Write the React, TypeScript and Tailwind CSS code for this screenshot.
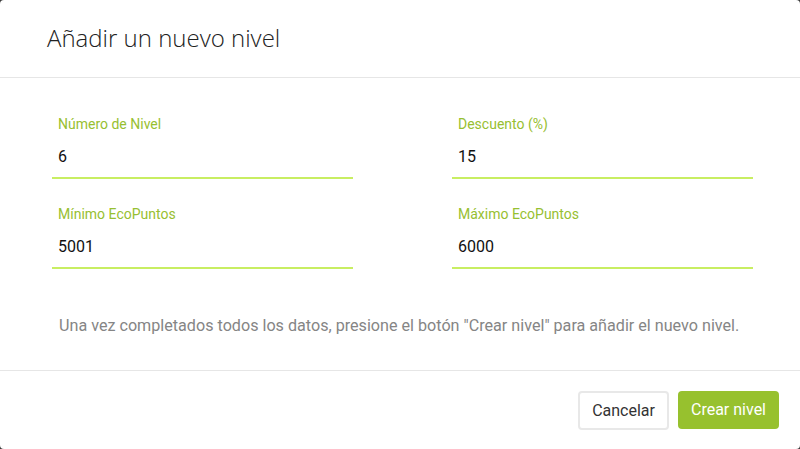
import { useState } from 'react';

const FIELDS = [
  { id: 'nivel', label: 'Número de Nivel', value: '6' },
  { id: 'descuento', label: 'Descuento (%)', value: '15' },
  { id: 'minimo', label: 'Mínimo EcoPuntos', value: '5001' },
  { id: 'maximo', label: 'Máximo EcoPuntos', value: '6000' },
];

function Field({ id, label, value }: { id: string; label: string; value: string }) {
  const [v, setV] = useState(value);
  return (
    <div className="pl-[52px] pr-[47px]">
      <label htmlFor={id} className="block h-5 pl-[6px] text-[14px] leading-5 text-[#97c031]">
        {label}
      </label>
      <input
        id={id}
        value={v}
        onChange={(e) => setV(e.target.value)}
        className="block h-[45px] w-full border-b-2 border-[#c8ee62] bg-transparent px-[6px] pt-[1px] text-[16px] text-[#111] outline-none"
      />
    </div>
  );
}

export default function App() {
  return (
    <div className="h-[449px] bg-[#3a3a3a] font-['Roboto',sans-serif]">
      <div className="flex h-full flex-col overflow-hidden rounded-[4px] bg-white">
        <div className="flex h-[78px] items-center border-b border-[#e6e6e6] px-[47px]">
          <h1 className="pb-[2px] font-['Open_Sans',sans-serif] text-[24px] font-light text-[#222]">
            Añadir un nuevo nivel
          </h1>
        </div>

        <div className="pt-[36px] pb-[34px]">
          <div className="grid grid-cols-2 gap-y-[25px]">
            {FIELDS.map((f) => (
              <Field key={f.id} {...f} />
            ))}
          </div>
          <p className="mt-[47px] pl-[59px] text-[16.15px] leading-5 text-[#858585]">
            Una vez completados todos los datos, presione el botón "Crear nivel" para añadir el nuevo nivel.
          </p>
        </div>

        <div className="flex flex-1 justify-end gap-[9px] border-t border-[#e6e6e6] pt-[20px] pr-[21px]">
          <button className="h-[39px] rounded-[4px] border-2 border-[#e8e8e8] bg-white px-[12px] text-[16px] text-[#333]">
            Cancelar
          </button>
          <button className="h-[38px] rounded-[4px] bg-[#97c12e] px-[13px] text-[16px] text-white">
            Crear nivel
          </button>
        </div>
      </div>
    </div>
  );
}
